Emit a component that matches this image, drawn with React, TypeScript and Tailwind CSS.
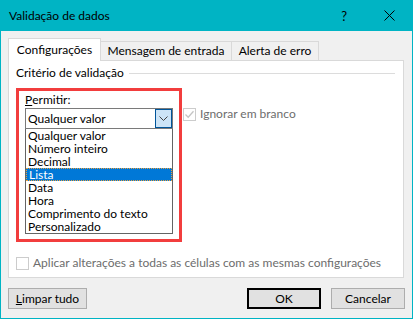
import React from "react";

const items = [
  "Qualquer valor",
  "Número inteiro",
  "Decimal",
  "Lista",
  "Data",
  "Hora",
  "Comprimento do texto",
  "Personalizado",
];

function Checkbox({ checked }: { checked?: boolean }) {
  return (
    <span className="flex h-[13px] w-[13px] shrink-0 items-center justify-center border border-[#cccccc] bg-white">
      {checked && (
        <svg width="11" height="11" viewBox="0 0 11 11">
          <path d="M1.5 5.5 L4.2 8.2 L9.5 2.2" fill="none" stroke="#c4c4c4" strokeWidth="1.3" />
        </svg>
      )}
    </span>
  );
}

function Button({ label, first, primary }: { label: string; first?: boolean; primary?: boolean }) {
  return (
    <button
      className={
        "flex h-[21px] items-center justify-center bg-[#e1e1e1] text-[12px] text-black " +
        (primary ? "w-[74px] border-2 border-[#0078d7]" : "border border-[#adadad] ") +
        (first ? "w-[79px]" : "w-[74px]")
      }
    >
      {first ? (
        <>
          <span className="underline">L</span>
          {label.slice(1)}
        </>
      ) : (
        label
      )}
    </button>
  );
}

export default function App() {
  return (
    <div
      className="flex h-[319px] w-[413px] flex-col border border-t-0 border-[#00b4c4] bg-[#f0f0f0] text-[12px] leading-[14px] text-black"
      style={{ fontFamily: '"Segoe UI", Lato, sans-serif' }}
    >
      {/* title bar */}
      <div className="flex h-[31px] shrink-0 items-center bg-[#00b4c4] pl-[8px]">
        <span className="flex-1 text-[12px] text-black">Validação de dados</span>
        <span className="mr-[37px] text-[13px]">?</span>
        <svg className="mr-[17px]" width="11" height="11" viewBox="0 0 11 11">
          <path d="M0.5 0.5 L10.5 10.5 M10.5 0.5 L0.5 10.5" stroke="#000" strokeWidth="1" />
        </svg>
      </div>

      <div className="flex flex-1 flex-col px-[7px] pt-[7px]">
        {/* tabs */}
        <div className="relative z-10 flex h-[22px] items-end">
          <div className="mb-[-1px] flex h-[23px] w-[93px] items-center justify-center border border-b-0 border-[#d9d9d9] bg-white">
            Configurações
          </div>
          <div className="flex h-[19px] w-[131px] items-center justify-center border border-b-0 border-l-0 border-[#d9d9d9]">
            Mensagem de entrada
          </div>
          <div className="flex h-[19px] w-[87px] items-center justify-center border border-b-0 border-l-0 border-[#d9d9d9]">
            Alerta de erro
          </div>
        </div>

        {/* panel */}
        <div className="flex h-[218px] w-[396px] flex-col border border-[#d9d9d9] bg-white pl-[7px] pt-[5px]">
          <div className="flex h-[14px] items-center">
            <span className="whitespace-nowrap">Critério de validação</span>
            <div className="ml-[5px] mr-[8px] h-px flex-1 bg-[#dcdcdc]" />
          </div>

          <div className="mt-[8px] flex items-start">
            <div className="flex h-[154px] w-[166px] flex-col border-[3px] border-[#f23d3d] pl-[6px] pt-[2px]">
              <div className="flex h-[14px] items-center">
                <span className="underline">P</span>ermitir:
              </div>
              <div className="mt-[1px] flex h-[21px] w-[148px] items-center border border-[#7a7a7a] bg-white pl-[2px]">
                <span className="flex-1">Qualquer valor</span>
                <span className="flex h-[19px] w-[17px] items-center justify-center border border-[#005499] bg-[#cce4f7]">
                  <svg width="9" height="5" viewBox="0 0 9 5">
                    <path d="M0.5 0.5 L4.5 4.5 L8.5 0.5" fill="none" stroke="#444" strokeWidth="1" />
                  </svg>
                </span>
              </div>
              <div className="flex w-[148px] flex-col border border-t-0 border-[#646464] bg-white">
                {items.map((it) => (
                  <div
                    key={it}
                    className={
                      "flex h-[13px] items-center whitespace-nowrap pl-[2px] leading-[13px] " +
                      (it === "Lista"
                        ? "border border-dotted border-[#e8a040] bg-[#0078d7] pl-[1px] text-white"
                        : "")
                    }
                  >
                    {it}
                  </div>
                ))}
              </div>
            </div>

            <div className="ml-[1px] mt-[19px] flex items-center">
              <Checkbox checked />
              <span className="ml-[4px] text-[#6d6d6d]">Ignorar em branco</span>
            </div>
          </div>

          <div className="mt-[14px] flex items-center">
            <Checkbox />
            <span className="ml-[4px] whitespace-nowrap text-[#6d6d6d]">
              Aplicar alterações a todas as células com as mesmas configurações
            </span>
          </div>
        </div>

        {/* buttons */}
        <div className="mt-[10px] flex items-center">
          <Button label="Limpar tudo" first />
          <div className="flex-1" />
          <Button label="OK" primary />
          <div className="w-[10px]" />
          <Button label="Cancelar" />
        </div>
      </div>
    </div>
  );
}
